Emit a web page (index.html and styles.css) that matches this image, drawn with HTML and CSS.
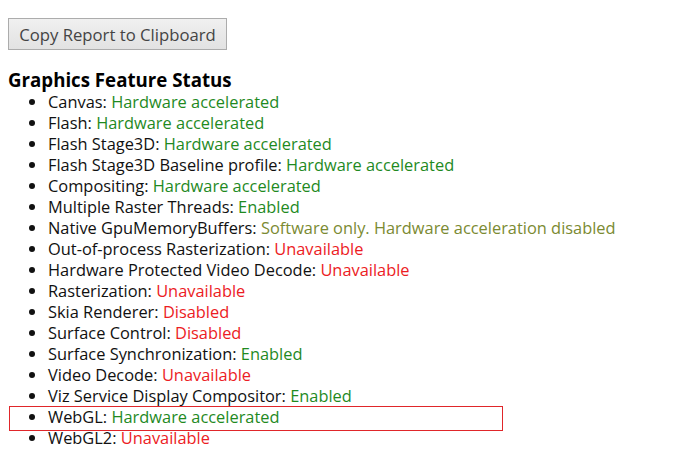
FILE: index.html
```html
<!DOCTYPE html>
<html>
<head>
<meta charset="utf-8">
<link rel="stylesheet" href="styles.css">
</head>
<body>
<div class="toolbar"><button class="copy-btn">Copy Report to Clipboard</button></div>
<h3 class="section-title">Graphics Feature Status</h3>
<ul class="feature-list">
  <li>Canvas: <span class="ok">Hardware accelerated</span></li>
  <li>Flash: <span class="ok">Hardware accelerated</span></li>
  <li>Flash Stage3D: <span class="ok">Hardware accelerated</span></li>
  <li>Flash Stage3D Baseline profile: <span class="ok">Hardware accelerated</span></li>
  <li>Compositing: <span class="ok">Hardware accelerated</span></li>
  <li>Multiple Raster Threads: <span class="ok">Enabled</span></li>
  <li>Native GpuMemoryBuffers: <span class="warn">Software only. Hardware acceleration disabled</span></li>
  <li>Out-of-process Rasterization: <span class="bad">Unavailable</span></li>
  <li>Hardware Protected Video Decode: <span class="bad">Unavailable</span></li>
  <li>Rasterization: <span class="bad">Unavailable</span></li>
  <li>Skia Renderer: <span class="bad">Disabled</span></li>
  <li>Surface Control: <span class="bad">Disabled</span></li>
  <li>Surface Synchronization: <span class="ok">Enabled</span></li>
  <li>Video Decode: <span class="bad">Unavailable</span></li>
  <li>Viz Service Display Compositor: <span class="ok">Enabled</span></li>
  <li class="marked">WebGL: <span class="ok">Hardware accelerated</span><span class="mark-box"></span></li>
  <li>WebGL2: <span class="bad">Unavailable</span></li>
</ul>
</body>
</html>
```
FILE: styles.css
```css
html, body {
  background: #ffffff;
}
body {
  margin: 8px;
  font-family: "Open Sans", "Noto Sans", sans-serif;
  font-size: 16px;
  color: #111;
}
.toolbar {
  padding-top: 10px;
}
.copy-btn {
  display: block;
  height: 32px;
  width: 219px;
  padding: 0;
  font-family: inherit;
  font-size: 16.7px;
  color: #444;
  background: linear-gradient(#f0f0f0, #e2e2e2);
  border: 1px solid #acacac;
  border-radius: 0;
}
.section-title {
  margin: 18px 0 0 0;
  font-size: 18.7px;
  line-height: 24px;
  font-weight: bold;
  color: #000;
}
.feature-list {
  margin: -1px 0 0 0;
  padding-left: 40px;
  font-size: 16.4px;
  line-height: 21px;
}
.ok { color: #1f8a1f; }
.warn { color: #7b8a32; }
.bad { color: #ec1c24; }
.marked {
  position: relative;
}
.mark-box {
  position: absolute;
  left: -39px;
  top: 0;
  width: 492px;
  height: 23px;
  border: 1px solid #e0262a;
}
```
